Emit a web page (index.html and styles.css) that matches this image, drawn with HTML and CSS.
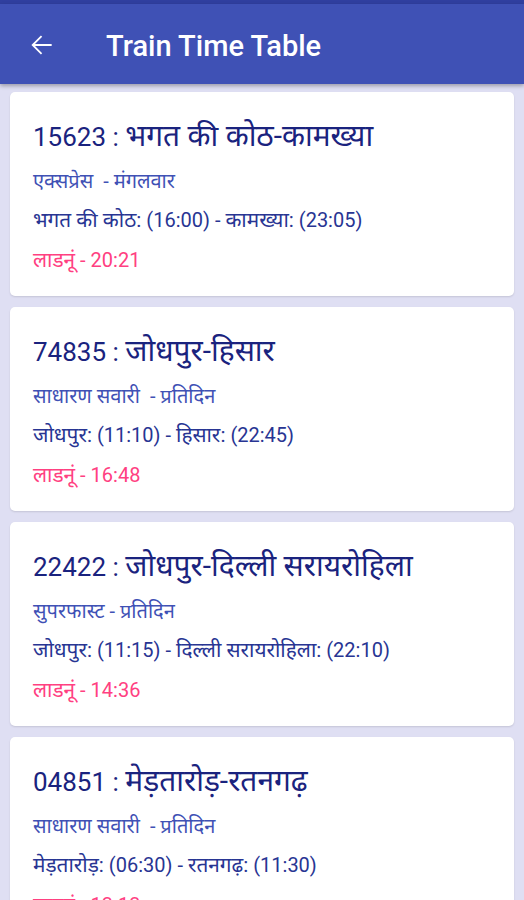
FILE: index.html
```html
<!DOCTYPE html>
<html lang="hi">
<head>
    <meta charset="UTF-8">
    <meta name="viewport" content="width=device-width, initial-scale=1.0">
    <title>Train Time Table</title>
    <link rel="stylesheet" href="styles.css">
</head>
<body>
    <div class="statusBar"></div>
    <header class="toolbar">
        <svg class="backIcon" viewBox="0 0 24 24" width="32" height="32">
            <path d="M20 11.2H7.5l5.4-5.4-.95-.95L4.8 12l7.15 7.15.95-.95-5.4-5.4H20z" fill="#fff"/>
        </svg>
        <h1 class="toolbarTitle">Train Time Table</h1>
    </header>

    <div class="trainList">
        <div class="trainCard">
            <div class="trainName">15623 : <span class="dev">भगत की कोठ-कामख्या</span></div>
            <div class="trainType">एक्सप्रेस &nbsp;- मंगलवार</div>
            <div class="trainTimes"><span class="dev">भगत की कोठ:</span> (16:00) - <span class="dev">कामख्या:</span> (23:05)</div>
            <div class="stationTime"><span class="dev">लाडनूं</span> - 20:21</div>
        </div>
        <div class="trainCard">
            <div class="trainName">74835 : <span class="dev">जोधपुर-हिसार</span></div>
            <div class="trainType">साधारण सवारी &nbsp;- प्रतिदिन</div>
            <div class="trainTimes"><span class="dev">जोधपुर:</span> (11:10) - <span class="dev">हिसार:</span> (22:45)</div>
            <div class="stationTime"><span class="dev">लाडनूं</span> - 16:48</div>
        </div>
        <div class="trainCard">
            <div class="trainName">22422 : <span class="dev">जोधपुर-दिल्ली सरायरोहिला</span></div>
            <div class="trainType">सुपरफास्ट - प्रतिदिन</div>
            <div class="trainTimes"><span class="dev">जोधपुर:</span> (11:15) - <span class="dev">दिल्ली सरायरोहिला:</span> (22:10)</div>
            <div class="stationTime"><span class="dev">लाडनूं</span> - 14:36</div>
        </div>
        <div class="trainCard">
            <div class="trainName">04851 : <span class="dev">मेड़तारोड़-रतनगढ़</span></div>
            <div class="trainType">साधारण सवारी &nbsp;- प्रतिदिन</div>
            <div class="trainTimes"><span class="dev">मेड़तारोड़:</span> (06:30) - <span class="dev">रतनगढ़:</span> (11:30)</div>
            <div class="stationTime"><span class="dev">लाडनूं</span> - 13:13</div>
        </div>
    </div>
</body>
</html>
```

FILE: styles.css
```css
body {
    margin: 0;
    font-family: Roboto, "Noto Sans", "Noto Sans Devanagari", sans-serif;
    background-color: #dfdff3;
    overflow: hidden;
}
.statusBar {
    height: 4px;
    background-color: #303f9f;
}
.toolbar {
    height: 80px;
    background-color: #3f51b5;
    display: flex;
    align-items: center;
    padding-left: 25px;
    box-shadow: 0 2px 4px rgba(0, 0, 0, 0.3);
    position: relative;
}
.backIcon {
    margin-top: 2px;
}
.toolbarTitle {
    margin: 4px 0 0 49px;
    color: #fff;
    font-size: 29px;
    font-weight: 500;
}
.trainList {
    display: flex;
    flex-direction: column;
    gap: 11px;
    padding: 8px 10px;
}
.trainCard {
    background-color: #fff;
    border-radius: 5px;
    padding: 26px 23px 18px;
    height: 160px;
    box-shadow: 0 1px 2px rgba(0, 0, 0, 0.12);
}
.dev {
    font-size: 1.04em;
}
.trainName {
    color: #1a237e;
    font-size: 26px;
    line-height: 36px;
}
.trainName .dev {
    font-size: 1.15em;
}
.trainType {
    color: #3f51b5;
    font-size: 20px;
    line-height: 28px;
    margin-top: 12px;
}
.trainTimes {
    color: #283593;
    font-size: 20px;
    line-height: 28px;
    margin-top: 11px;
}
.stationTime {
    color: #ff4081;
    font-size: 20px;
    line-height: 28px;
    margin-top: 12px;
}
```
